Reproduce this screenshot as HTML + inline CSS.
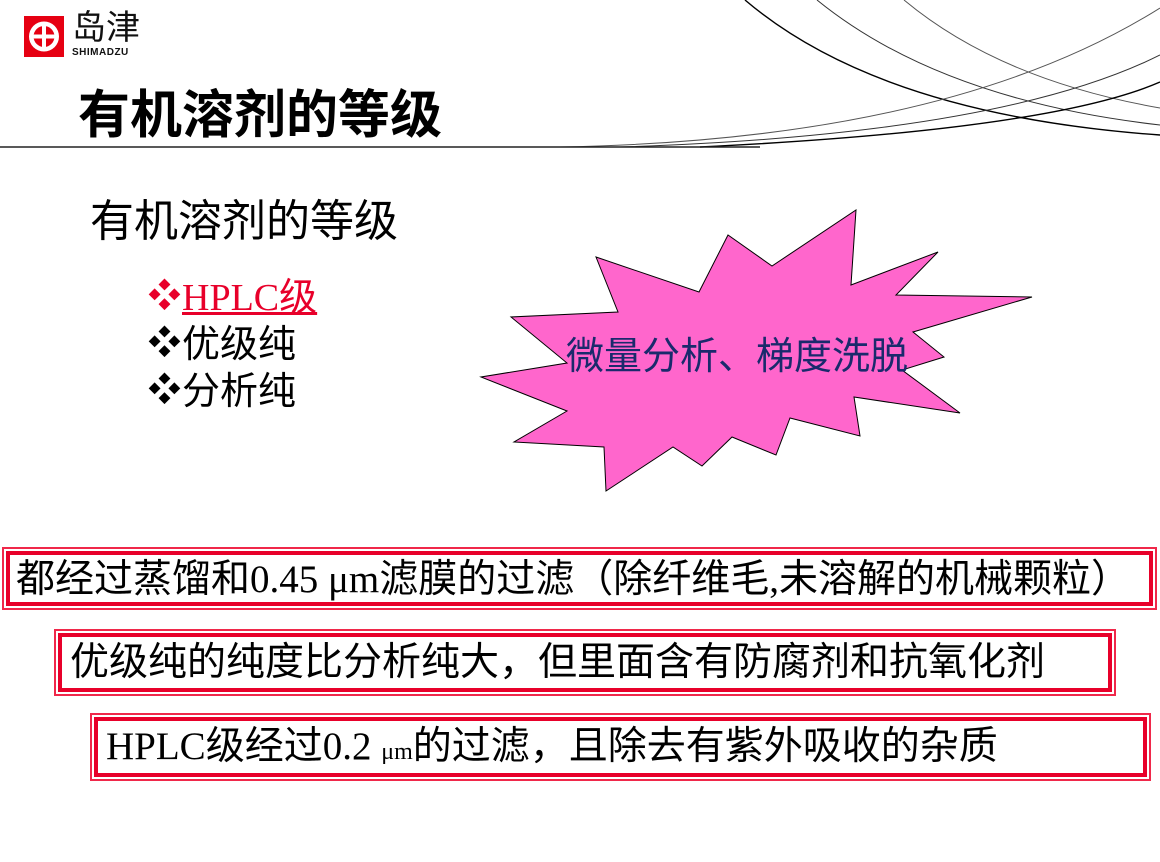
<!DOCTYPE html>
<html><head><meta charset="utf-8"><style>
body{margin:0;width:1160px;height:862px;background:#fff;position:relative;overflow:hidden;font-family:"Liberation Serif","Noto Sans CJK SC",serif}
.a{position:absolute;white-space:nowrap}
.cjk{font-family:"Liberation Sans","Noto Sans CJK SC",sans-serif}
.box{position:absolute;border:2px solid #f0284a;box-sizing:border-box}
.box div{position:absolute;inset:2px;border:4px solid #e8002a}
.bt{position:absolute;font-size:39px;color:#000;white-space:nowrap;font-family:"Liberation Serif","Noto Sans CJK SC",serif}
.d{font-size:33px;vertical-align:3px;display:inline-block;width:34px}
</style></head><body>
<svg class="a" style="left:0;top:0" width="1160" height="862">
<g fill="none" stroke="#000" stroke-width="1">
<path d="M745 0 Q880 115 1160 135" stroke-width="1.4"/>
<path d="M817 0 Q940 100 1160 125" stroke="#333"/>
<path d="M904 0 Q1000 80 1160 108" stroke="#555"/>
<path d="M560 147 Q950 140 1160 8" stroke="#555"/>
<path d="M620 147 Q1000 135 1160 55" stroke="#333"/>
<path d="M700 147 Q1050 130 1160 82" stroke-width="1.4"/>
</g>
<line x1="0" y1="147" x2="760" y2="147" stroke="#222" stroke-width="1.5"/>
<polygon fill="#ff66cc" stroke="#000" stroke-width="1" points="596,257 699,292 728,235 772,266 856,210 851,285 938,252 896,295 1032,297 913,332 944,357 902,370 960,413 854,397 860,436 790,418 776,455 732,437 702,466 673,447 606,491 604,447 514,442 567,411 481,377 567,363 511,317 618,312"/>
<rect x="24" y="16" width="40" height="41" fill="#e60012"/>
<circle cx="44" cy="36.5" r="15" fill="#fff"/>
<circle cx="44" cy="36.5" r="10.5" fill="#e60012"/>
<rect x="33" y="34.5" width="22" height="4" fill="#fff"/>
<rect x="42" y="25" width="4" height="23" fill="#fff"/>
</svg>
<div class="a cjk" style="left:72px;top:10px;font-size:34px;line-height:36px;color:#111">岛津</div>
<div class="a cjk" style="left:72px;top:47px;font-size:10px;font-weight:bold;letter-spacing:0.5px;color:#111">SHIMADZU</div>
<div class="a cjk" style="left:78px;top:84px;font-size:52px;font-weight:bold;line-height:64px">有机溶剂的等级</div>
<div class="a cjk" style="left:90px;top:194px;font-size:44px;line-height:56px">有机溶剂的等级</div>
<div class="a" style="left:148px;top:274px;font-size:38px;line-height:46px">
<div><span class="d" style="color:#e8002a">❖</span><span style="color:#e8002a;text-decoration:underline">HPLC级</span></div>
<div><span class="d">❖</span>优级纯</div>
<div><span class="d">❖</span>分析纯</div>
</div>
<div class="a cjk" style="left:566px;top:332px;font-size:38px;color:#1a2a6c;line-height:50px">微量分析、梯度洗脱</div>
<div class="box" style="left:2px;top:547px;width:1155px;height:63px"><div></div></div>
<div class="bt" style="left:16px;top:555px;line-height:50px">都经过蒸馏和0.45 μm滤膜的过滤（除纤维毛,未溶解的机械颗粒）</div>
<div class="box" style="left:54px;top:629px;width:1062px;height:67px"><div></div></div>
<div class="bt" style="left:70px;top:638px;line-height:50px">优级纯的纯度比分析纯大，但里面含有防腐剂和抗氧化剂</div>
<div class="box" style="left:90px;top:713px;width:1061px;height:68px"><div></div></div>
<div class="bt" style="left:106px;top:722px;line-height:50px">HPLC级经过0.2 <span style="font-size:24px">μm</span>的过滤，且除去有紫外吸收的杂质</div>
</body></html>
